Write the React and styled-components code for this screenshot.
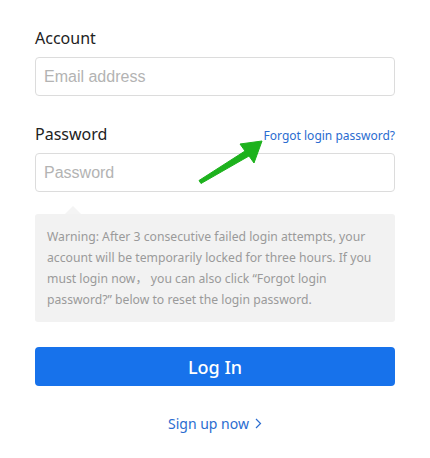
import React from 'react'
import styled, { createGlobalStyle } from 'styled-components'

const Global = createGlobalStyle`
	body {
		margin: 0;
		background: #fff;
		font-family: "Noto Sans", "Liberation Sans", sans-serif;
	}
`

const Page = styled.div`
	position: relative;
	width: 360px;
	padding: 27px 35px 0 35px;
`

const LabelRow = styled.div`
	display: flex;
	align-items: baseline;
	justify-content: space-between;
	height: 22px;
	margin-top: ${props => props.top || 0}px;
	margin-bottom: 8px;
`

const Label = styled.label`
	font-size: 16px;
	line-height: 22px;
	color: #222;
`

const LinkSmall = styled.a`
	font-size: 12px;
	color: #2a6cd0;
	text-decoration: none;
	cursor: pointer;
`

const Input = styled.input`
	display: block;
	box-sizing: border-box;
	width: 100%;
	height: 39px;
	padding: 0 8px;
	border: 1px solid #dcdcdc;
	border-radius: 4px;
	font-family: "Liberation Sans", Arial, sans-serif;
	font-size: 16px;
	color: #333;
	outline: none;

	&::placeholder {
		color: #b3b3b3;
	}
`

const Warning = styled.div`
	position: relative;
	margin-top: 22px;
	padding: 12px 12px;
	background: #f2f2f2;
	border-radius: 3px;
	font-family: "Noto Sans", "Noto Sans CJK SC", sans-serif;
	font-size: 12.2px;
	line-height: 21px;
	color: #9a9a9a;

	&::before {
		content: "";
		position: absolute;
		top: -8px;
		left: 30px;
		border-left: 8px solid transparent;
		border-right: 8px solid transparent;
		border-bottom: 8px solid #f4f4f4;
	}
`

const Button = styled.button`
	display: block;
	width: 100%;
	height: 39px;
	margin-top: 25px;
	border: none;
	border-radius: 4px;
	background: #1772eb;
	color: #fff;
	font-family: "Noto Sans", sans-serif;
	font-size: 18px;
	font-weight: 500;
	cursor: pointer;
`

const SignUp = styled.div`
	display: flex;
	justify-content: center;
	align-items: center;
	gap: 6px;
	margin-top: 27px;
	height: 20px;
	font-size: 14px;
	color: #2a6cd0;
	cursor: pointer;
`

const Arrow = styled.svg`
	position: absolute;
	left: 0;
	top: 0;
	pointer-events: none;
`

export default function App() {
	return (
		<Page>
			<Global />
			<LabelRow>
				<Label>Account</Label>
			</LabelRow>
			<Input placeholder="Email address" />

			<LabelRow top={ 27 }>
				<Label>Password</Label>
				<LinkSmall>Forgot login password?</LinkSmall>
			</LabelRow>
			<Input type="password" placeholder="Password" />

			<Warning>
				Warning: After 3 consecutive failed login attempts, your account will be temporarily locked for three hours. If you must login now， you can also click “Forgot login password?” below to reset the login password.
			</Warning>

			<Button>Log In</Button>

			<SignUp>
				Sign up now
				<svg width="7" height="11" viewBox="0 0 7 11">
					<path d="M1 1 L5.5 5.5 L1 10" fill="none" stroke="#2a6cd0" strokeWidth="1.2" />
				</svg>
			</SignUp>

			<Arrow width="430" height="458">
				<polygon points="199,180.5 245,151 240,144 262,141 254,163 249,156 201,183.5" fill="#1db21d" strokeLinejoin="round" stroke="#1db21d" strokeWidth="1" />
			</Arrow>
		</Page>
	)
}
